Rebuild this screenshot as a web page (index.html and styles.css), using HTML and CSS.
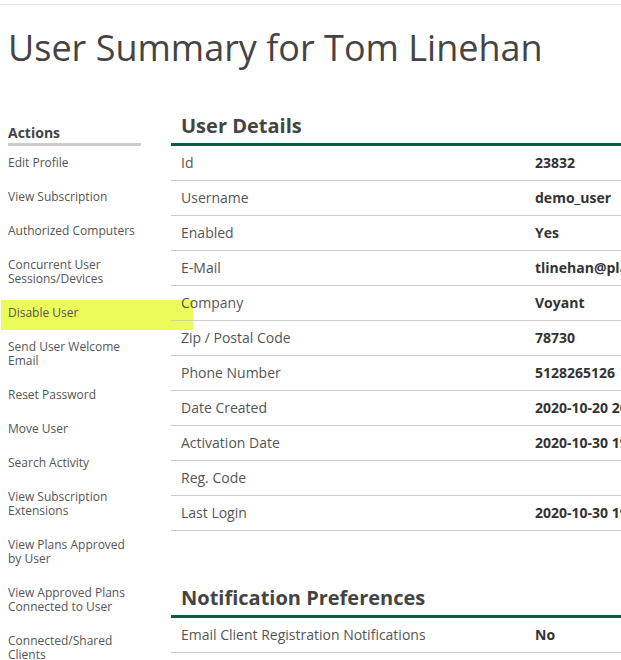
FILE: index.html
```html
<!DOCTYPE html>
<html lang="en">
<head>
    <meta charset="UTF-8">
    <meta name="viewport" content="width=device-width, initial-scale=1.0">
    <title>User Summary</title>
    <link rel="stylesheet" href="styles.css">
</head>
<body>
    <div class="topbar"></div>
    <div class="page">
        <h1 class="page-title">User Summary for Tom Linehan</h1>

        <div class="layout">
            <div class="sidebar">
                <h3 class="side-title">Actions</h3>
                <a class="side-link" href="#">Edit Profile</a>
                <a class="side-link" href="#">View Subscription</a>
                <a class="side-link" href="#">Authorized Computers</a>
                <a class="side-link" href="#">Concurrent User Sessions/Devices</a>
                <a class="side-link marked" href="#">Disable User</a>
                <a class="side-link" href="#">Send User Welcome Email</a>
                <a class="side-link" href="#">Reset Password</a>
                <a class="side-link" href="#">Move User</a>
                <a class="side-link" href="#">Search Activity</a>
                <a class="side-link" href="#">View Subscription Extensions</a>
                <a class="side-link" href="#">View Plans Approved by User</a>
                <a class="side-link" href="#">View Approved Plans Connected to User</a>
                <a class="side-link" href="#">Connected/Shared Clients</a>
            </div>

            <div class="main">
                <div class="section">
                    <h2 class="section-title">User Details</h2>
                    <div class="row"><span class="label">Id</span><span class="value">23832</span></div>
                    <div class="row"><span class="label">Username</span><span class="value">demo_user</span></div>
                    <div class="row"><span class="label">Enabled</span><span class="value">Yes</span></div>
                    <div class="row"><span class="label">E-Mail</span><span class="value">tlinehan@planroom.com</span></div>
                    <div class="row"><span class="label">Company</span><span class="value">Voyant</span></div>
                    <div class="row"><span class="label">Zip / Postal Code</span><span class="value">78730</span></div>
                    <div class="row"><span class="label">Phone Number</span><span class="value">5128265126</span></div>
                    <div class="row"><span class="label">Date Created</span><span class="value">2020-10-20 20:14:51</span></div>
                    <div class="row"><span class="label">Activation Date</span><span class="value">2020-10-30 19:02:11</span></div>
                    <div class="row"><span class="label">Reg. Code</span><span class="value"></span></div>
                    <div class="row"><span class="label">Last Login</span><span class="value">2020-10-30 19:05:42</span></div>
                </div>

                <div class="section">
                    <h2 class="section-title">Notification Preferences</h2>
                    <div class="row"><span class="label">Email Client Registration Notifications</span><span class="value">No</span></div>
                </div>
            </div>
        </div>
    </div>
</body>
</html>
```

FILE: styles.css
```css
html, body {
    overflow: hidden;
}

body {
    margin: 0;
    font-family: "Open Sans", Arial, sans-serif;
    color: #555;
    background: #fff;
}

.topbar {
    height: 4px;
    border-bottom: 1px solid #e8e8e8;
}

.page {
    padding: 0 8px;
    width: 700px;
}

.page-title {
    margin: 18px 0 0 0;
    height: 90px;
    font-size: 36px;
    font-weight: 400;
    line-height: 50px;
    color: #444;
    white-space: nowrap;
}

.layout {
    display: flex;
    align-items: flex-start;
}

.sidebar {
    width: 133px;
    flex-shrink: 0;
    margin-right: 30px;
}

.side-title {
    margin: 10px 0 0 0;
    font-size: 14px;
    line-height: 20px;
    font-weight: 700;
    color: #444;
    border-bottom: 3px solid #ccc;
}

.side-link {
    display: block;
    position: relative;
    padding: 10px 0;
    font-size: 12px;
    line-height: 14px;
    color: #555;
    text-decoration: none;
}

/* yellow highlighter mark drawn over the screenshot */
.side-link.marked::before {
    content: "";
    position: absolute;
    top: 4px;
    bottom: 0;
    left: -7px;
    width: 192px;
    background: #ebfc5a;
    z-index: -1;
}

.main {
    width: 600px;
    flex-shrink: 0;
}

.section + .section {
    margin-top: 54px;
}

.section-title {
    margin: 0;
    padding: 0 10px 4px;
    font-size: 20px;
    line-height: 26px;
    font-weight: 700;
    color: #444;
    border-bottom: 3px solid #0b5e40;
}

.row {
    display: grid;
    grid-template-columns: 354px 1fr;
    border-bottom: 1px solid #ccc;
}

.label,
.value {
    padding: 7px 10px;
    font-size: 14px;
    line-height: 20px;
    white-space: nowrap;
}

.value {
    font-weight: 700;
    color: #333;
}
```
